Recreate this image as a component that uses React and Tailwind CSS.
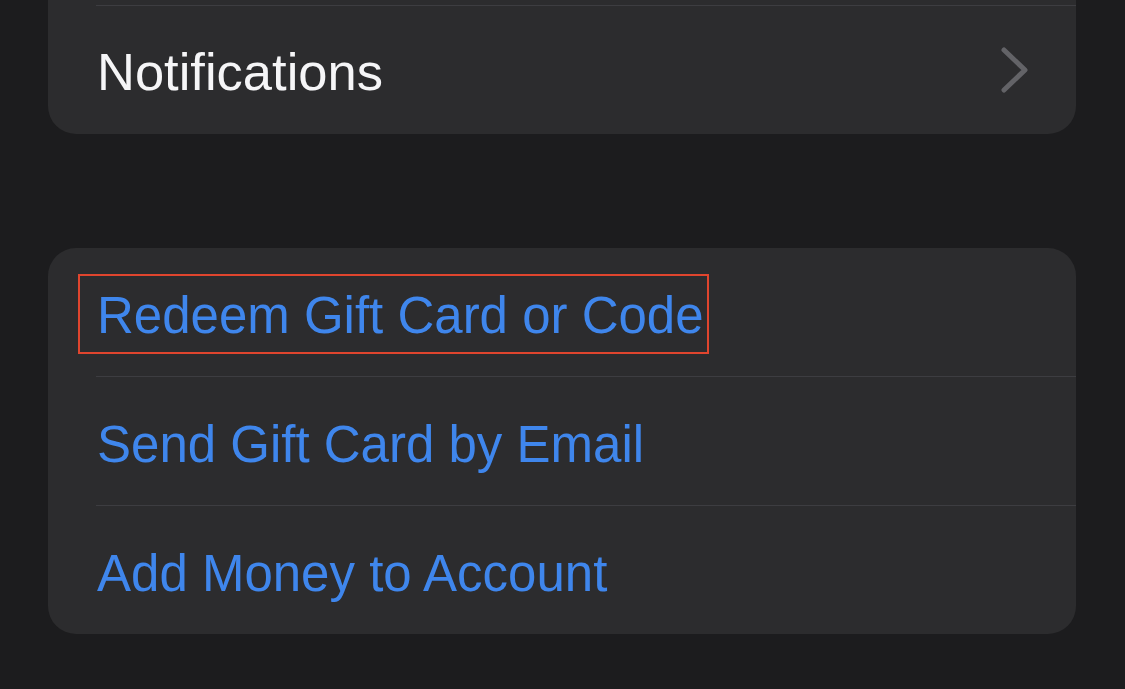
import React from "react";

const Separator = () => <div className="h-px ml-12 bg-[#3d3d41]" />;

const Chevron = () => (
  <svg width="30" height="46" viewBox="0 0 30 46" className="shrink-0">
    <polyline
      points="5,3 26,23 5,43"
      fill="none"
      stroke="#636367"
      strokeWidth="5"
      strokeLinecap="round"
      strokeLinejoin="round"
    />
  </svg>
);

const LinkRow = ({ label, highlighted }) => (
  <div className="relative h-[128px] flex items-center pl-[49px]">
    <span className="text-[51px] leading-none text-[#3f86ec] pt-[6px]">{label}</span>
    {highlighted && (
      <div className="absolute left-[30px] top-[26px] w-[631px] h-[80px] border-[2.5px] border-[#e0452e]" />
    )}
  </div>
);

const App = () => {
  return (
    <div
      className="w-[1125px] h-[689px] overflow-hidden bg-[#1c1c1e] px-12"
      style={{ fontFamily: '"Liberation Sans", Arial, sans-serif' }}
    >
      {/* notifications card, cut off at the top */}
      <div className="bg-[#2c2c2e] rounded-b-[28px] mr-px">
        <div className="h-[5px]" />
        <Separator />
        <div className="h-[128px] flex items-center justify-between pl-[49px] pr-[47px]">
          <span className="text-[52.5px] leading-none text-[#f5f5f7] pt-[4px]">Notifications</span>
          <Chevron />
        </div>
      </div>

      <div className="h-[114px]" />

      {/* gift card actions */}
      <div className="bg-[#2c2c2e] rounded-[28px] mr-px">
        <LinkRow label="Redeem Gift Card or Code" highlighted />
        <Separator />
        <LinkRow label="Send Gift Card by Email" />
        <Separator />
        <LinkRow label="Add Money to Account" />
      </div>
    </div>
  );
};

export default App;
